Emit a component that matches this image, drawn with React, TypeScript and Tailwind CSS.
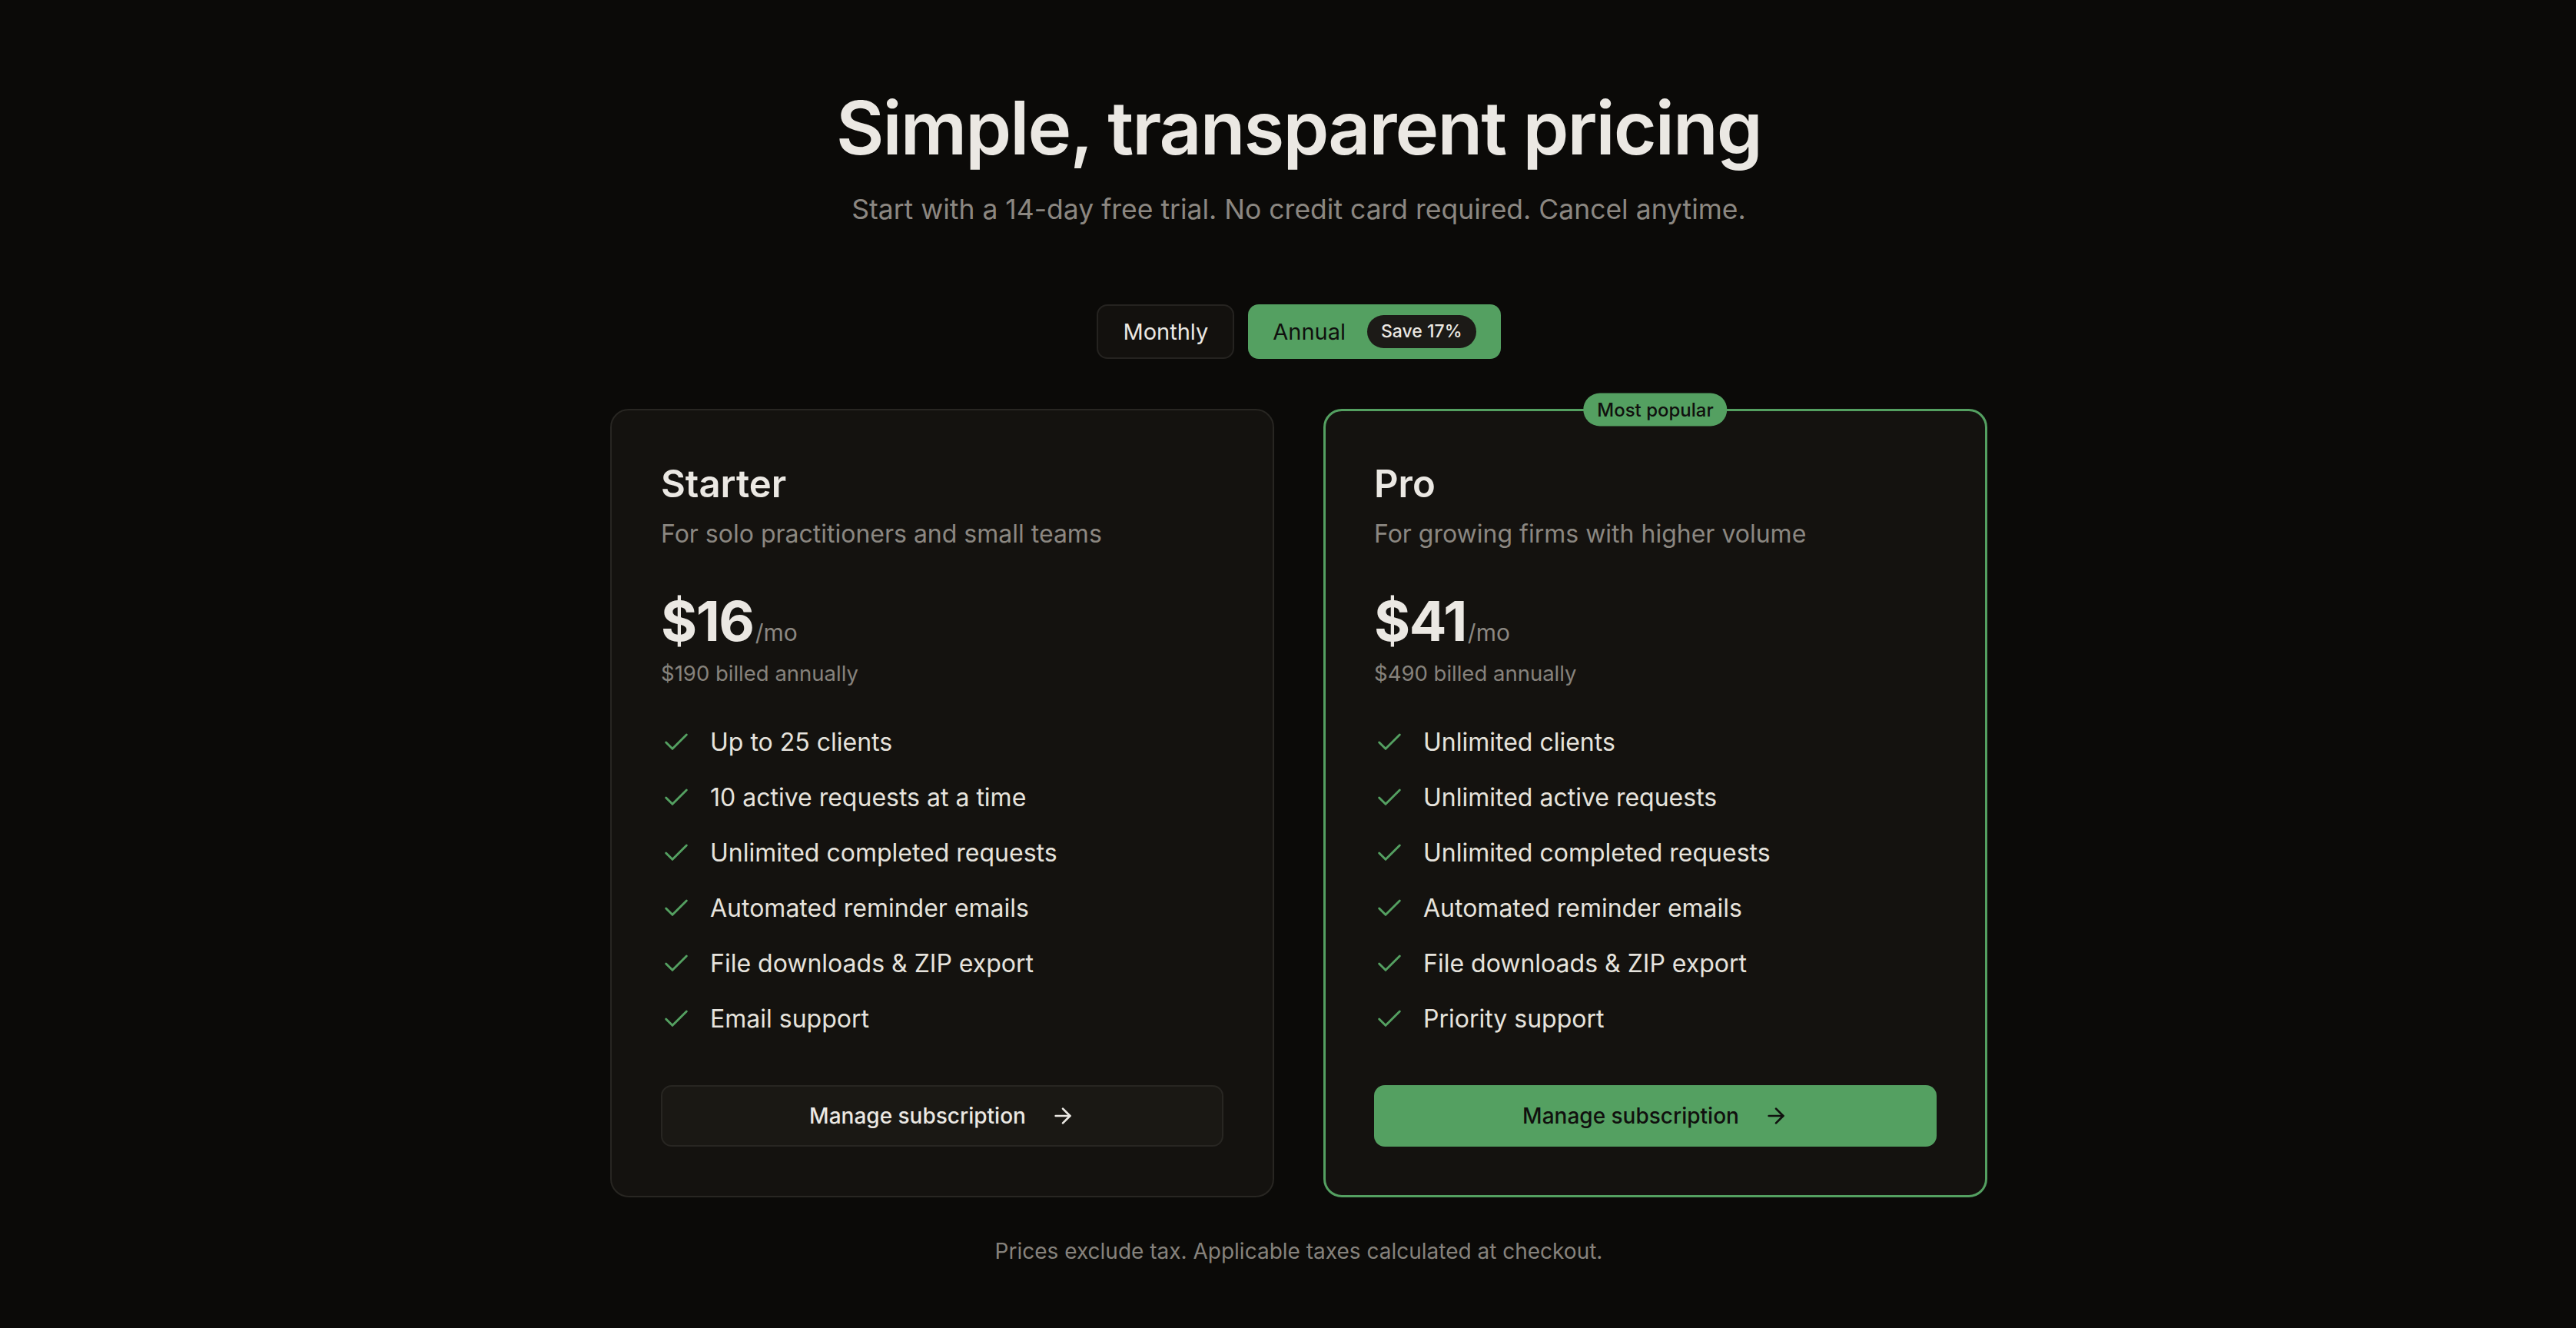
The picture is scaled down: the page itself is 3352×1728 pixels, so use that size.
import { ArrowRight, Check } from 'lucide-react';

type Plan = {
  name: string;
  blurb: string;
  price: string;
  billed: string;
  features: string[];
  popular?: boolean;
};

const plans: Plan[] = [
  {
    name: 'Starter',
    blurb: 'For solo practitioners and small teams',
    price: '$16',
    billed: '$190 billed annually',
    features: [
      'Up to 25 clients',
      '10 active requests at a time',
      'Unlimited completed requests',
      'Automated reminder emails',
      'File downloads & ZIP export',
      'Email support',
    ],
  },
  {
    name: 'Pro',
    blurb: 'For growing firms with higher volume',
    price: '$41',
    billed: '$490 billed annually',
    features: [
      'Unlimited clients',
      'Unlimited active requests',
      'Unlimited completed requests',
      'Automated reminder emails',
      'File downloads & ZIP export',
      'Priority support',
    ],
    popular: true,
  },
];

function PlanCard({ plan }: { plan: Plan }) {
  return (
    <div
      className={`relative flex flex-col rounded-[24px] bg-[#14120f] ${
        plan.popular ? 'border-[3px] border-[#54a061] p-[63px]' : 'border-2 border-[#282622] p-[64px]'
      }`}
    >
      {plan.popular && (
        <span className="absolute left-1/2 top-[-2px] -translate-x-1/2 -translate-y-1/2 rounded-full bg-[#54a061] px-[18px] text-[24px] font-medium leading-[43px] text-[#10100e]">
          Most popular
        </span>
      )}
      <h3 className="text-[49px] font-semibold leading-[64px] text-[#ebe8e3]">{plan.name}</h3>
      <p className="mt-[11px] text-[32px] leading-[44px] text-[#8b8781]">{plan.blurb}</p>
      <div className="mt-[55px] flex items-baseline">
        <span className="text-[72px] font-bold leading-[72px] tracking-[-0.02em] text-[#ebe8e3]">{plan.price}</span>
        <span className="ml-[2px] text-[30px] text-[#8b8781]">/mo</span>
      </div>
      <p className="mt-[12px] text-[27.5px] leading-[36px] text-[#86827c]">{plan.billed}</p>
      <ul className="mt-[50px] flex flex-col gap-[28px]">
        {plan.features.map((f) => (
          <li key={f} className="flex items-center gap-[24px] text-[32px] leading-[44px] text-[#e6e3dd]">
            <Check size={40} strokeWidth={1.75} className="shrink-0 text-[#54a061]" />
            {f}
          </li>
        ))}
      </ul>
      <button
        className={`mt-[64px] flex h-[80px] items-center justify-center gap-[32px] rounded-[14px] text-[28px] font-medium ${
          plan.popular
            ? 'bg-[#54a061] text-[#10100e]'
            : 'border-2 border-[#282622] bg-[#1a1814] text-[#ebe8e3]'
        }`}
      >
        Manage subscription
        <ArrowRight size={32} strokeWidth={2} />
      </button>
    </div>
  );
}

export default function App() {
  return (
    <div className="min-h-screen bg-[#0b0a08] pl-[28px] font-['Inter',sans-serif]">
      <div className="mx-auto flex w-[1792px] flex-col items-center pt-[118px] pb-[40px]">
        <h1 className="text-[96px] font-semibold leading-[96px] tracking-[-0.02em] text-[#ebe8e3]">
          Simple, transparent pricing
        </h1>
        <p className="mt-[33px] text-[35.5px] leading-[51px] text-[#8b8781]">
          Start with a 14-day free trial. No credit card required. Cancel anytime.
        </p>

        <div className="mt-[98px] flex items-center gap-[18px]">
          <button className="h-[71px] rounded-[14px] border-2 border-[#252320] bg-[#13110e] px-[32px] text-[29px] text-[#ebe8e3]">
            Monthly
          </button>
          <button className="flex h-[71px] items-center gap-[28px] rounded-[14px] bg-[#54a061] px-[32px] text-[29px] text-[#10100e]">
            Annual
            <span className="rounded-full bg-[#1c1a17] px-[18px] text-[23px] font-medium leading-[43px] text-[#ebe8e3]">
              Save 17%
            </span>
          </button>
        </div>

        <div className="mt-[65px] grid w-full grid-cols-2 gap-[64px]">
          {plans.map((p) => (
            <PlanCard key={p.name} plan={p} />
          ))}
        </div>

        <p className="mt-[50px] text-[28px] leading-[40px] text-[#86827c]">
          Prices exclude tax. Applicable taxes calculated at checkout.
        </p>
      </div>
    </div>
  );
}
